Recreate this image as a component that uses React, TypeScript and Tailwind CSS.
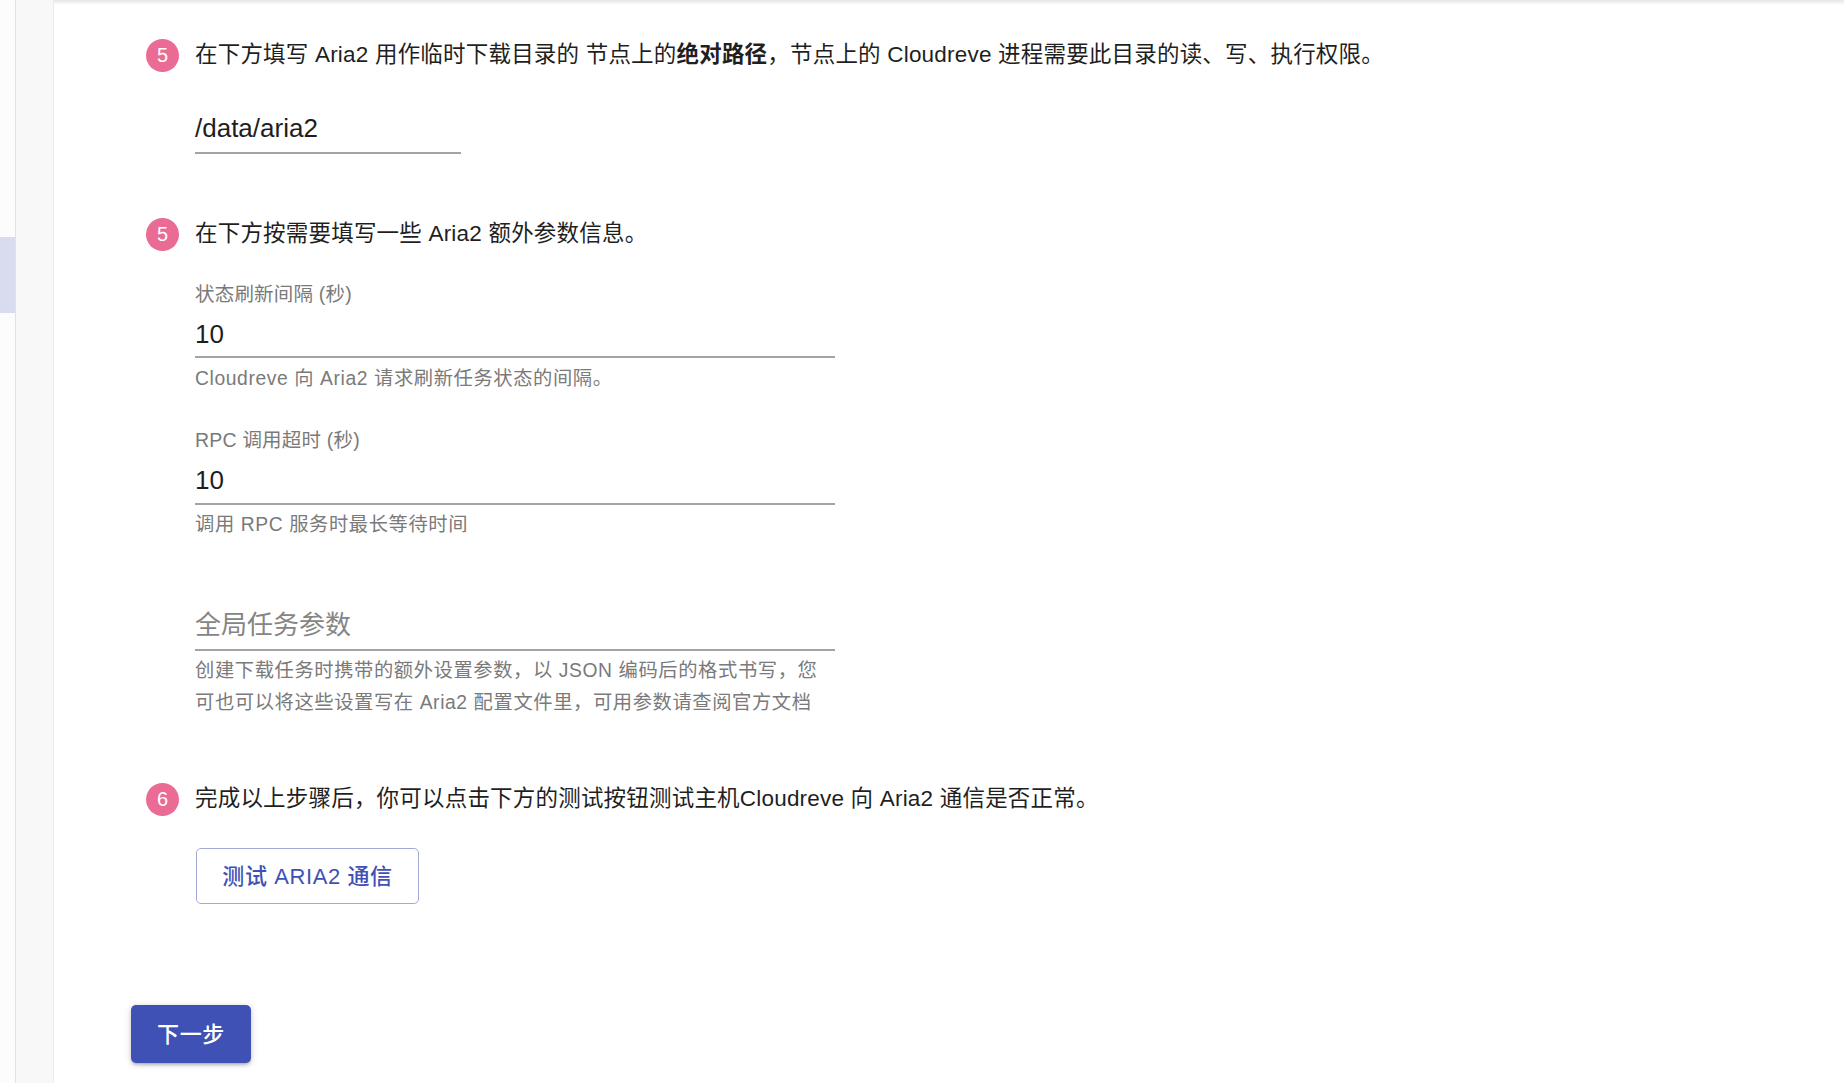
import React from "react";

const FONT = { fontFamily: '"Liberation Sans", "Noto Sans CJK SC", sans-serif' };

function Badge({ n }: { n: string }) {
  return (
    <div className="w-[33px] h-[33px] rounded-full bg-[#ea6c95] flex items-center justify-center text-white text-[20px] leading-none shrink-0">
      {n}
    </div>
  );
}

function StepRow({ n, children }: { n: string; children: React.ReactNode }) {
  return (
    <div className="flex items-center h-[32px]">
      <Badge n={n} />
      <div className="ml-[16px] text-[22.5px] leading-[32px] tracking-[0.2px] text-[#1f1f1f] whitespace-nowrap">
        {children}
      </div>
    </div>
  );
}

export default function App() {
  return (
    <div className="w-full h-[1083px] flex bg-white overflow-hidden relative" style={FONT}>
      {/* drawer edge */}
      <div className="w-[16px] h-full bg-[#fcfcfd] border-r border-[#e2e2e4] shrink-0 flex flex-col">
        <div className="mt-[237px] h-[76px] bg-[#d9dbef]" />
      </div>
      {/* page background gap */}
      <div className="w-[38px] h-full bg-[#f8f8f9] border-r border-[#ececee] shrink-0" />
      {/* main paper */}
      <div className="flex-1 h-full relative">
        <div className="absolute top-0 left-0 right-0 h-[5px] bg-gradient-to-b from-[#e6e6e6] to-transparent" />
        <div className="pl-[92px] pt-[39px]">
          <StepRow n="5">
            在下方填写 Aria2 用作临时下载目录的 节点上的<span className="font-bold">绝对路径</span>，节点上的 Cloudreve 进程需要此目录的读、写、执行权限。
          </StepRow>
          <div className="ml-[49px] mt-[41px] w-[266px] border-b-2 border-[#a3a3a3] pb-[8px]">
            <div className="text-[26px] leading-[32px] text-[#1e1e1e]">/data/aria2</div>
          </div>

          <div className="mt-[64px]">
            <StepRow n="5">在下方按需要填写一些 Aria2 额外参数信息。</StepRow>
          </div>

          <div className="ml-[49px] w-[640px]">
            <div className="mt-[32px] text-[19.5px] leading-[24px] tracking-[0.2px] text-[#7a7a7a]">状态刷新间隔 (秒)</div>
            <div className="mt-[12px] border-b-2 border-[#a3a3a3] pb-[6px]">
              <div className="text-[26px] leading-[32px] text-[#1e1e1e]">10</div>
            </div>
            <div className="mt-[9px] text-[19.3px] leading-[24px] tracking-[0.6px] text-[#7a7a7a]">
              Cloudreve 向 Aria2 请求刷新任务状态的间隔。
            </div>

            <div className="mt-[37px] text-[19.5px] leading-[24px] tracking-[0.2px] text-[#7a7a7a]">RPC 调用超时 (秒)</div>
            <div className="mt-[12px] border-b-2 border-[#a3a3a3] pb-[7px]">
              <div className="text-[26px] leading-[32px] text-[#1e1e1e]">10</div>
            </div>
            <div className="mt-[8px] text-[19.3px] leading-[24px] tracking-[0.6px] text-[#7a7a7a]">调用 RPC 服务时最长等待时间</div>

            <div className="mt-[72px] border-b-2 border-[#a3a3a3] pb-[8px]">
              <div className="text-[26px] leading-[32px] text-[#858585]">全局任务参数</div>
            </div>
            <div className="mt-[4px] text-[19.3px] leading-[32px] tracking-[0.6px] text-[#7a7a7a] whitespace-nowrap">
              创建下载任务时携带的额外设置参数，以 JSON 编码后的格式书写，您
              <br />
              可也可以将这些设置写在 Aria2 配置文件里，可用参数请查阅官方文档
            </div>
          </div>

          <div className="mt-[64px]">
            <StepRow n="6">完成以上步骤后，你可以点击下方的测试按钮测试主机Cloudreve 向 Aria2 通信是否正常。</StepRow>
          </div>

          <div className="ml-[50px] mt-[33px]">
            <button className="w-[223px] h-[56px] rounded-[5px] border-[1.5px] border-[#a2a9d6] bg-white text-[#3f51b5] text-[22px] font-medium tracking-[0.6px] flex items-center justify-center">
              测试 ARIA2 通信
            </button>
          </div>
        </div>

        <div className="pl-[77px] mt-[101px]">
          <button className="w-[120px] h-[58px] rounded-[5px] bg-[#3f51b5] text-white text-[22px] font-medium tracking-[0.6px] flex items-center justify-center shadow-[0_3px_3px_-2px_rgba(0,0,0,0.2),0_2px_4px_0_rgba(0,0,0,0.14),0_1px_8px_0_rgba(0,0,0,0.12)]">
            下一步
          </button>
        </div>
      </div>
    </div>
  );
}
